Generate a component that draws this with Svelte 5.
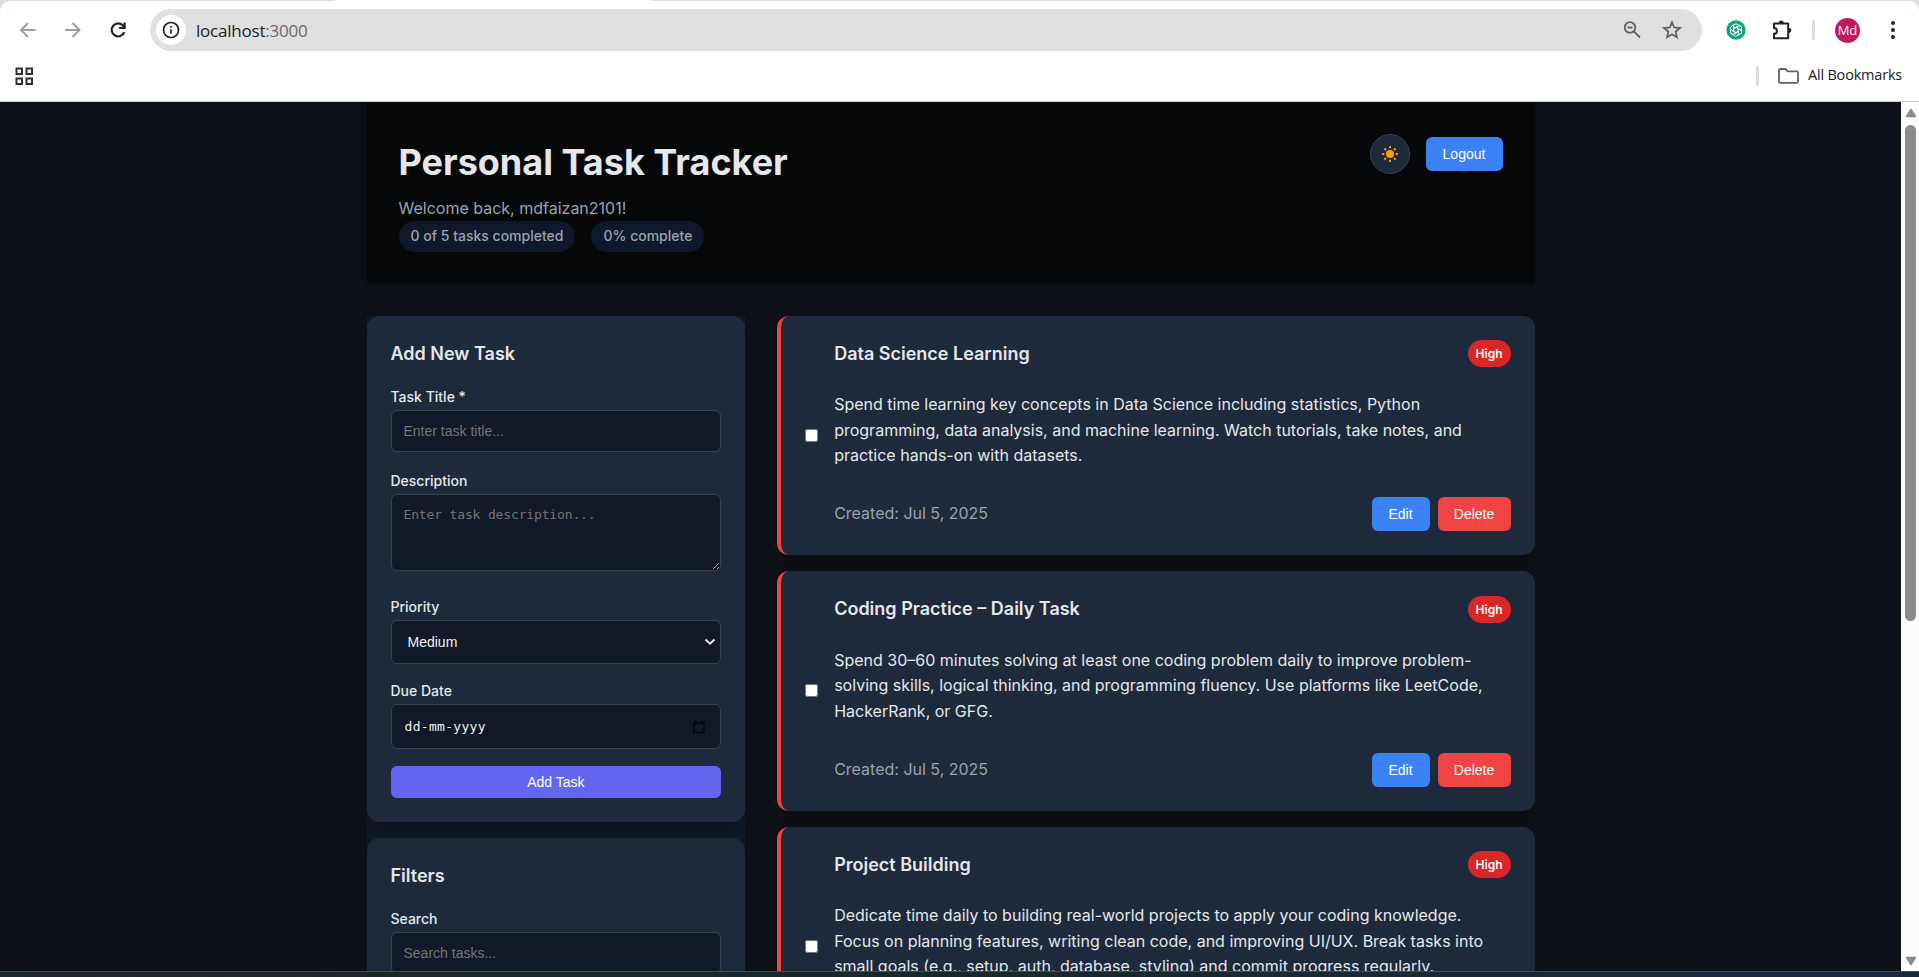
<script>
  const tasks = [
    { title: 'Data Science Learning', text: 'Spend time learning key concepts in Data Science including statistics, Python programming, data analysis, and machine learning. Watch tutorials, take notes, and practice hands-on with datasets.' },
    { title: 'Coding Practice – Daily Task', text: 'Spend 30–60 minutes solving at least one coding problem daily to improve problem-solving skills, logical thinking, and programming fluency. Use platforms like LeetCode, HackerRank, or GFG.' },
    { title: 'Project Building', text: 'Dedicate time daily to building real-world projects to apply your coding knowledge. Focus on planning features, writing clean code, and improving UI/UX. Break tasks into small goals (e.g., setup, auth, database, styling) and commit progress regularly.' }
  ];
  const petals = [0, 60, 120, 180, 240, 300];
  const rays = [0, 45, 90, 135, 180, 225, 270, 315];
</script>

<div class="window">
  <div class="tabstrip"><span class="tab"></span></div>
  <div class="chrome">
    <div class="toolbar">
      <svg class="nav" width="20" height="20" viewBox="0 0 20 20"><path d="M17.5 10H3.5M10 3L3 10l7 7" /></svg>
      <svg class="nav fwd" width="20" height="20" viewBox="0 0 20 20"><path d="M2 10h14M9.500 3l7 7-7 7" /></svg>
      <svg class="nav reload" width="20" height="20" viewBox="0 0 20 20"><path d="M16.300 12.200A6.500 6.500 0 1 1 15.200 5.800L16.500 7.500" /><path d="M16.600 2.500V8h-5.500" /></svg>
      <div class="address">
        <span class="site">
          <svg width="18" height="18" viewBox="0 0 18 18"><circle cx="9" cy="9" r="7.500" fill="none" stroke="#202124" stroke-width="1.700" /><path d="M9 8.200v4.600M9 5v1.700" stroke="#202124" stroke-width="1.600" /></svg>
        </span>
        <span class="url">localhost<i>:3000</i></span>
        <svg class="mag" width="20" height="20" viewBox="0 0 20 20"><circle cx="8" cy="7.500" r="5.300" /><path d="M5.500 7.500h5M12 11.500l6 6" /></svg>
        <svg class="star" width="20" height="20" viewBox="0 0 20 20"><path d="M10 2.300l2.200 5.200 5.700.5-4.300 3.700 1.300 5.500L10 14.300l-4.900 2.900 1.300-5.500L2.100 8l5.700-.5z" /></svg>
      </div>
      <svg class="gpt" width="20" height="20" viewBox="-10 -10 20 20">
        <circle r="9.700" fill="#0fa37f" />
        {#each petals as a}
          <path transform="rotate({a})" d="M-2.300 1.300V-3.700A2.300 2.300 0 0 1 1.200 -5.700L4.400 -3.900M-2.300 -1.300L1.800 -3.700" fill="none" stroke="#fff" stroke-width=".9" />
        {/each}
      </svg>
      <svg class="puzzle" width="22" height="22" viewBox="0 0 22 22"><path d="M3 4.500h14.200v14.700H3v-4.400a2.800 2.800 0 0 0 0-5.800z" fill="none" stroke="#202124" stroke-width="2" stroke-linejoin="round" /><path d="M7.700 4a2.500 2.500 0 0 1 5 0zM17.800 9a2.500 2.500 0 0 1 0 5z" fill="#202124" /></svg>
      <span class="sep"></span>
      <span class="avatar">Md</span>
      <svg class="dots" width="6" height="20" viewBox="0 0 6 20" fill="#202124"><circle cx="3" cy="3" r="2" /><circle cx="3" cy="10" r="2" /><circle cx="3" cy="17" r="2" /></svg>
    </div>
    <div class="bookmarks">
      <svg width="19" height="19" viewBox="0 0 19 19" fill="none" stroke="#303134" stroke-width="2"><path d="M1.500 1.500h5.500v5.500H1.500zM11.500 1.500H17v5.500h-5.500zM1.500 11.500H7V17H1.500zM11.500 11.500H17V17h-5.500z" /></svg>
      <span class="sep"></span>
      <svg class="folder" width="21" height="16" viewBox="0 0 21 16"><path d="M1 2.200Q1 1 2.200 1H7.500l2 2.300H18.800Q20 3.300 20 4.500V13.600Q20 14.800 18.800 14.800H2.200Q1 14.800 1 13.600z" fill="none" stroke="#5f6368" stroke-width="1.800" /></svg>
      <span class="all">All Bookmarks</span>
    </div>
  </div>

  <div class="view">
    <div class="page">
      <header>
        <div>
          <h1>Personal Task Tracker</h1>
          <p>Welcome back, mdfaizan2101!</p>
          <div class="stats"><span>0 of 5 tasks completed</span><span>0% complete</span></div>
        </div>
        <div class="actions">
          <button class="theme" aria-label="Toggle theme">
            <svg width="18" height="18" viewBox="-9 -9 18 18"><circle r="4" fill="#f59e0b" />{#each rays as a}<path transform="rotate({a})" d="M0 -8V-5.700" stroke="#f59e0b" stroke-width="1.900" />{/each}</svg>
          </button>
          <button class="btn logout">Logout</button>
        </div>
      </header>

      <main>
        <aside>
          <section class="panel">
            <h2>Add New Task</h2>
            <label for="title">Task Title *</label>
            <input id="title" class="box" placeholder="Enter task title..." />
            <label for="desc" class="second">Description</label>
            <textarea id="desc" class="box" placeholder="Enter task description..."></textarea>
            <label for="prio" class="third">Priority</label>
            <div id="prio" class="box select"><span>Medium</span>
              <svg width="12" height="8" viewBox="0 0 12 8"><path d="M1.500 1.500L6 5.700l4.500-4.200" fill="none" stroke="#e8eaed" stroke-width="2" /></svg>
            </div>
            <label for="due" class="fourth">Due Date</label>
            <div id="due" class="box date"><span>dd-mm-yyyy</span>
              <svg width="12" height="14" viewBox="0 0 12 14"><path d="M1 2.500h10v10H1zM1 3.500h10M3 0v2M9 0v2" fill="none" stroke="#05070b" stroke-width="1.400" /></svg>
            </div>
            <button class="add">Add Task</button>
          </section>
          <section class="panel">
            <h2>Filters</h2>
            <label for="search">Search</label>
            <input id="search" class="box" placeholder="Search tasks..." />
          </section>
        </aside>

        <div class="list">
          {#each tasks as t}
            <article>
              <input type="checkbox" />
              <div class="body">
                <div class="top"><h3>{t.title}</h3><span class="badge">High</span></div>
                <p>{t.text}</p>
                <div class="foot"><span class="created">Created: Jul 5, 2025</span><button class="btn edit">Edit</button><button class="btn delete">Delete</button></div>
              </div>
            </article>
          {/each}
        </div>
      </main>
    </div>
    <div class="scroll">
      <svg width="12" height="10" viewBox="0 0 12 10"><path d="M6 1.500L10.500 8.500H1.500z" /></svg>
      <span class="thumb"></span>
      <svg class="down" width="12" height="10" viewBox="0 0 12 10"><path d="M6 8.500L1.500 1.500H10.500z" /></svg>
    </div>
  </div>
  <div class="taskbar"></div>
</div>

<style>
  :global(body) { margin: 0; overflow: hidden; }
  * { box-sizing: border-box; }
  .window { width: 1919px; height: 977px; display: flex; flex-direction: column; overflow: hidden; background: #e5dbd8; font-family: Inter, sans-serif; }
  .tabstrip { height: 1px; display: flex; padding-left: 335px; flex: none; }
  .tab { width: 317px; background: #fff; }
  .chrome { height: 101px; flex: none; background: #fff; border-radius: 10px 10px 0 0; border-bottom: 1px solid #c9cccc; }
  .toolbar { height: 58px; display: flex; align-items: center; padding-left: 18px; }
  .nav { fill: none; stroke: #9d9d9d; stroke-width: 2; margin-right: 25px; flex: none; }
  .reload { stroke: #202124; margin-right: 22px; stroke-width: 2.200; }
  .address { width: 1552px; height: 42px; border-radius: 21px; background: #e0e0e0; display: flex; align-items: center; padding-left: 6px; flex: none; }
  .site { width: 30px; height: 30px; border-radius: 50%; background: #fff; display: grid; place-items: center; }
  .url { font: 17px "Open Sans", sans-serif; letter-spacing: -.22px; color: #202124; margin-left: 10px; flex: 1; }
  .url i { font-style: normal; color: #6a6a6a; }
  .mag, .star { fill: none; stroke: #5f6368; stroke-width: 1.800; }
  .mag { margin-right: 20px; }
  .star { margin-right: 20px; }
  .gpt { margin-left: 24px; }
  .puzzle { margin-left: 25px; }
  .sep { width: 3px; height: 20px; border-radius: 2px; background: #e3dbd9; }
  .toolbar .sep { margin-left: 19px; }
  .avatar { width: 25px; height: 25px; border-radius: 50%; background: #c2185b; color: #fff; font: 13px/25px "Open Sans", sans-serif; text-align: center; margin-left: 20px; }
  .dots { margin-left: 30px; }
  .bookmarks { height: 34px; display: flex; align-items: center; padding: 0 18px 0 15px; }
  .bookmarks .sep { margin-left: auto; }
  .folder { margin: 0 9px 0 19px; }
  .all { font: 14.500px/18px "Open Sans", sans-serif; letter-spacing: -.2px; color: #202124; width: 93px; margin-top: -2px; white-space: nowrap; }

  .view { height: 869px; flex: none; display: flex; overflow: hidden; background: #0d1117; }
  .page { width: 1168px; margin-left: 366.500px; color: #e5e7eb; line-height: 1.6; flex: none; }
  header { height: 181.600px; background: #050709; padding: 32px; display: flex; justify-content: space-between; box-shadow: 0 1px 4px rgba(0, 0, 0, .3); }
  h1, h2, h3, p { margin: 0; }
  h1 { font-size: 36px; font-weight: 700; line-height: 57.600px; margin-bottom: 4px; }
  header p { color: #9ca3af; font-size: 16px; }
  .stats { display: flex; gap: 16px; }
  .stats span { background: #0f172a; color: #9ca3af; font-size: 14px; font-weight: 500; border-radius: 20px; padding: 4px 12px; }
  .actions { display: flex; gap: 16px; align-items: center; height: 40px; }
  button { border: 0; margin: 0; font-family: "Liberation Sans", Arial, sans-serif; color: #fff; font-size: 14px; padding: 0; }
  .theme { width: 40px; height: 40px; border-radius: 50%; background: #1e293b; border: 1px solid #334155; display: grid; place-items: center; }
  .btn { height: 34px; border-radius: 6px; }
  .logout { width: 77px; background: #3b82f6; }
  main { display: grid; grid-template-columns: 1fr 2fr; gap: 32px; margin-top: 32px; }
  aside { background: #111827; display: flex; flex-direction: column; gap: 16px; height: 1000px; }
  .panel { background: #1e293b; border-radius: 12px; padding: 24px; box-shadow: 0 4px 12px rgba(0, 0, 0, .3); display: flex; flex-direction: column; }
  h2, h3 { font-size: 18px; font-weight: 600; line-height: 28px; }
  h2 { margin-bottom: 18px; }
  label { font-size: 14px; font-weight: 500; line-height: 22px; margin-bottom: 2px; }
  .second { margin-top: 18px; }
  .third { margin-top: 25px; }
  .fourth { margin-top: 16.500px; }
  .box { width: 100%; height: 42px; background: #111827; border: 1px solid #374151; border-radius: 6px; padding: 0 12px; font: 14px "Liberation Sans", Arial, sans-serif; color: #f1f3f5; }
  .box::placeholder { color: #757575; }
  textarea.box { height: 77px; padding: 12px; font: 13px/16px "DejaVu Sans Mono", monospace; letter-spacing: -.15px; resize: vertical; display: block; }
  .select { height: 44px; display: flex; align-items: center; justify-content: space-between; padding: 0 4px 0 16px; }
  .date { height: 45px; display: flex; align-items: center; justify-content: space-between; padding: 0 15px 0 13px; font: 13px "DejaVu Sans Mono", monospace; letter-spacing: .3px; }
  .add { height: 32px; border-radius: 6px; background: #6366f1; margin-top: 16.800px; }
  .list { display: flex; flex-direction: column; gap: 16px; }
  article { height: 239.600px; flex: none; background: #1e293b; border-left: 4px solid #ef4444; border-radius: 12px; padding: 24px; display: flex; align-items: center; gap: 16px; box-shadow: 0 4px 12px rgba(0, 0, 0, .3); }
  article input { width: 13px; height: 13px; margin: 0; flex: none; }
  .body { flex: 1; height: 100%; display: flex; flex-direction: column; }
  .top { display: flex; justify-content: space-between; align-items: center; }
  .badge { background: #dc2626; color: #fff; font-size: 12px; font-weight: 600; line-height: 19px; padding: 4px 8px; border-radius: 14px; }
  .body p { font-size: 16px; line-height: 25.600px; margin-top: 24.400px; }
  .foot { display: flex; align-items: center; margin-top: auto; }
  .created { color: #9ca3af; flex: 1; }
  .edit { width: 58px; background: #3b82f6; margin-right: 8px; }
  .delete { width: 73px; background: #ef4444; }
  .scroll { width: 18px; margin-left: auto; background: #fcfcfc; display: flex; flex-direction: column; align-items: center; padding: 6px 0 5px 1px; }
  .scroll svg { fill: #8b8b8b; stroke: #8b8b8b; stroke-width: 1.500; stroke-linejoin: round; flex: none; }
  .thumb { width: 11px; height: 496px; border-radius: 6px; background: #8b8b8b; margin-top: 7px; }
  .down { margin-top: auto; }
  .taskbar { height: 6px; flex: none; border-top: 1px solid #454b50; background: linear-gradient(90deg, #1b262f, #222427 12%, #18272b 25%, #18272b 50%, #1b283c); }
</style>
